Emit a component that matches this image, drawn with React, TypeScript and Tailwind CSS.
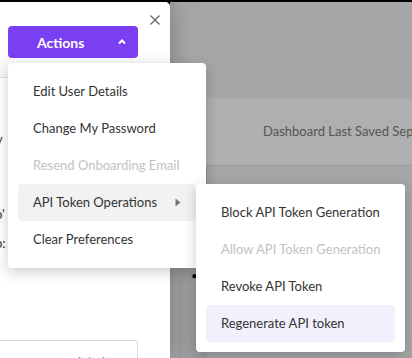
import React from 'react';

const mainItems: { label: string; disabled?: boolean; sub?: boolean }[] = [
  { label: 'Edit User Details' },
  { label: 'Change My Password' },
  { label: 'Resend Onboarding Email', disabled: true },
  { label: 'API Token Operations', sub: true },
  { label: 'Clear Preferences' },
];

const subItems: { label: string; disabled?: boolean; active?: boolean }[] = [
  { label: 'Block API Token Generation' },
  { label: 'Allow API Token Generation', disabled: true },
  { label: 'Revoke API Token' },
  { label: 'Regenerate API token', active: true },
];

export default function App() {
  return (
    <div
      className="relative flex h-[358px] w-[412px] flex-col overflow-hidden bg-black"
      style={{ fontFamily: 'Lato, "Liberation Sans", sans-serif' }}
    >
      <div className="mt-[2px] flex flex-1">
        {/* drawer */}
        <div className="relative z-10 flex w-[170px] shrink-0 flex-col overflow-hidden rounded-tr-[5px] bg-white shadow-[0_0_24px_rgba(0,0,0,0.28)]">
          <div className="flex h-[76px] shrink-0 flex-col border-b border-[#e4e4e4] bg-gradient-to-b from-white from-60% to-[#f7f7f7]">
            <div className="flex justify-end pt-[12px] pr-[9px]">
              <svg width="12" height="12" viewBox="0 0 12 12" className="text-[#666]">
                <path d="M1.5 1.5l9 9M10.5 1.5l-9 9" stroke="currentColor" strokeWidth="1.3" />
              </svg>
            </div>
            <button className="ml-[8px] flex h-[32px] w-[130px] items-center rounded-[4px] bg-[#7b3ff2] pl-[29px] pr-[11px] text-[14px] font-bold text-white">
              <span className="flex-1 text-left">Actions</span>
              <svg width="10" height="8" viewBox="0 0 10 8">
                <path d="M2 5.5l3-3 3 3" fill="none" stroke="white" strokeWidth="2" />
              </svg>
            </button>
          </div>
          <div className="flex flex-col text-[13px] text-[#333] whitespace-nowrap">
            <span className="mt-[52px] -ml-[46px]">Visibility</span>
            <span className="mt-[55px] -ml-[60px]">Lorem ipso'</span>
            <span className="mt-[10px] -ml-[60px]">Lorem ipso:</span>
          </div>
          <div className="mt-auto h-[18px] w-[138px] shrink-0 rounded-tr-[4px] border-t border-r border-[#d9d9d9] pt-[12px] pl-[75px] text-[13px] text-[#4a90e2]">
            Admin
          </div>
        </div>

        {/* page behind overlay */}
        <div className="flex flex-1 flex-col bg-[#a6a6a6]">
          <div className="h-[96px] shrink-0" />
          <div className="flex flex-1 flex-col bg-[#afafaf]">
            <div className="flex h-[68px] shrink-0 items-center border-b border-[#9a9a9a] pl-[93px] text-[13px] whitespace-nowrap text-[#555]">
              Dashboard Last Saved Sep 12, 2023
            </div>
            <div className="flex flex-1 bg-[#a3a3a3] pl-[8px]">
              <div className="w-[28px] shrink-0 bg-[#9d9d9d] pt-[104px] pl-[13px] text-[12px] leading-none text-black">•</div>
              <div className="flex-1 border-l border-[#979797] bg-[#a6a6a6]" />
              <div className="flex w-[8px] shrink-0 flex-col overflow-hidden bg-[#dcdcdc] pt-[132px] text-[13px] leading-[16px] whitespace-nowrap text-[#333]">
                <span>ic</span>
                <span>us</span>
              </div>
            </div>
          </div>
        </div>
      </div>

      {/* actions menu */}
      <div className="absolute top-[63px] left-[8px] z-20 w-[198px] rounded-[4px] bg-white py-[10px] shadow-[0_4px_14px_rgba(0,0,0,0.2)]">
        {mainItems.map((item) => (
          <div
            key={item.label}
            className={`mx-[10px] flex h-[37px] items-center rounded-[4px] pl-[15px] pr-[15px] text-[13px] ${
              item.sub ? 'bg-[#f2f2f2]' : ''
            } ${item.disabled ? 'text-[#c2c2c2]' : 'text-[#333]'}`}
          >
            <span className="flex-1 whitespace-nowrap">{item.label}</span>
            {item.sub && (
              <svg width="6" height="9" viewBox="0 0 6 9">
                <path d="M0.5 0.5L5.5 4.5L0.5 8.5Z" fill="#777" />
              </svg>
            )}
          </div>
        ))}
      </div>

      {/* sub menu */}
      <div className="absolute top-[184px] left-[196px] z-30 w-[209px] rounded-[4px] bg-white py-[10px] shadow-[0_4px_14px_rgba(0,0,0,0.2)]">
        {subItems.map((item) => (
          <div
            key={item.label}
            className={`mx-[10px] flex h-[37px] items-center rounded-[4px] pl-[15px] text-[13px] whitespace-nowrap ${
              item.active ? 'bg-[#f3f0fd]' : ''
            } ${item.disabled ? 'text-[#c2c2c2]' : 'text-[#333]'}`}
          >
            {item.label}
          </div>
        ))}
      </div>
    </div>
  );
}
